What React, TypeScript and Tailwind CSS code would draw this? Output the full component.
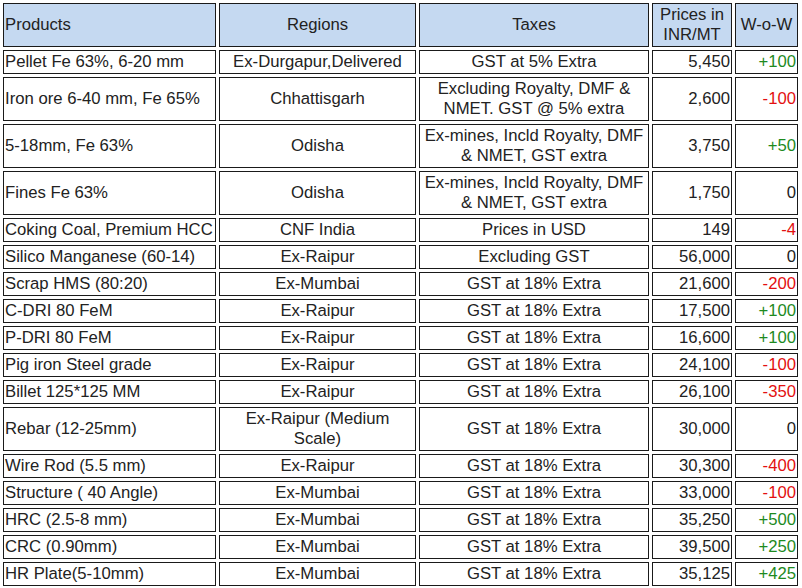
import { Fragment } from "react";

type Row = {
  product: string;
  region: string;
  tax: string;
  price: string;
  wow: string;
};

// "|" marks the place where the cell breaks to a second line
const rows: Row[] = [
  { product: "Pellet Fe 63%, 6-20 mm", region: "Ex-Durgapur,Delivered", tax: "GST at 5% Extra", price: "5,450", wow: "+100" },
  { product: "Iron ore 6-40 mm, Fe 65%", region: "Chhattisgarh", tax: "Excluding Royalty, DMF &|NMET. GST @ 5% extra", price: "2,600", wow: "-100" },
  { product: "5-18mm, Fe 63%", region: "Odisha", tax: "Ex-mines, Incld Royalty, DMF|& NMET, GST extra", price: "3,750", wow: "+50" },
  { product: "Fines Fe 63%", region: "Odisha", tax: "Ex-mines, Incld Royalty, DMF|& NMET, GST extra", price: "1,750", wow: "0" },
  { product: "Coking Coal, Premium HCC", region: "CNF India", tax: "Prices in USD", price: "149", wow: "-4" },
  { product: "Silico Manganese (60-14)", region: "Ex-Raipur", tax: "Excluding GST", price: "56,000", wow: "0" },
  { product: "Scrap HMS (80:20)", region: "Ex-Mumbai", tax: "GST at 18% Extra", price: "21,600", wow: "-200" },
  { product: "C-DRI 80 FeM", region: "Ex-Raipur", tax: "GST at 18% Extra", price: "17,500", wow: "+100" },
  { product: "P-DRI 80 FeM", region: "Ex-Raipur", tax: "GST at 18% Extra", price: "16,600", wow: "+100" },
  { product: "Pig iron Steel grade", region: "Ex-Raipur", tax: "GST at 18% Extra", price: "24,100", wow: "-100" },
  { product: "Billet 125*125 MM", region: "Ex-Raipur", tax: "GST at 18% Extra", price: "26,100", wow: "-350" },
  { product: "Rebar (12-25mm)", region: "Ex-Raipur (Medium|Scale)", tax: "GST at 18% Extra", price: "30,000", wow: "0" },
  { product: "Wire Rod (5.5 mm)", region: "Ex-Raipur", tax: "GST at 18% Extra", price: "30,300", wow: "-400" },
  { product: "Structure ( 40 Angle)", region: "Ex-Mumbai", tax: "GST at 18% Extra", price: "33,000", wow: "-100" },
  { product: "HRC (2.5-8 mm)", region: "Ex-Mumbai", tax: "GST at 18% Extra", price: "35,250", wow: "+500" },
  { product: "CRC (0.90mm)", region: "Ex-Mumbai", tax: "GST at 18% Extra", price: "39,500", wow: "+250" },
  { product: "HR Plate(5-10mm)", region: "Ex-Mumbai", tax: "GST at 18% Extra", price: "35,125", wow: "+425" },
];

const wowColor = (v: string) => {
  if (v.startsWith("+")) return "text-[#1e8a1e]";
  if (v.startsWith("-")) return "text-[#e31010]";
  return "text-[#222222]";
};

const Lines = ({ text }: { text: string }) => (
  <>
    {text.split("|").map((part, i) => (
      <Fragment key={i}>
        {i > 0 && <br />}
        {part}
      </Fragment>
    ))}
  </>
);

const cell = "border border-[#1a1a1a] px-px py-px align-middle font-normal whitespace-nowrap";

export default function App() {
  return (
    <div
      className="bg-white text-[16.7px] leading-[20px] text-[#222222]"
      style={{ fontFamily: '"Liberation Sans", Arial, sans-serif' }}
    >
      <table className="w-[801px] table-fixed border-separate border-spacing-[3px]">
        <colgroup>
          <col className="w-[213px]" />
          <col className="w-[197px]" />
          <col className="w-[230px]" />
          <col className="w-[80px]" />
          <col className="w-[63px]" />
        </colgroup>
        <thead>
          <tr className="bg-[#c5d9f1]">
            <th className={`${cell} text-left`}>Products</th>
            <th className={`${cell} text-center`}>Regions</th>
            <th className={`${cell} text-center`}>Taxes</th>
            <th className={`${cell} text-center`}>
              Prices in
              <br />
              INR/MT
            </th>
            <th className={`${cell} text-center`}>W-o-W</th>
          </tr>
        </thead>
        <tbody>
          {rows.map((r) => (
            <tr key={r.product}>
              <td className={`${cell} text-left`}>{r.product}</td>
              <td className={`${cell} text-center`}>
                <Lines text={r.region} />
              </td>
              <td className={`${cell} text-center`}>
                <Lines text={r.tax} />
              </td>
              <td className={`${cell} text-right`}>{r.price}</td>
              <td className={`${cell} text-right ${wowColor(r.wow)}`}>{r.wow}</td>
            </tr>
          ))}
        </tbody>
      </table>
    </div>
  );
}
